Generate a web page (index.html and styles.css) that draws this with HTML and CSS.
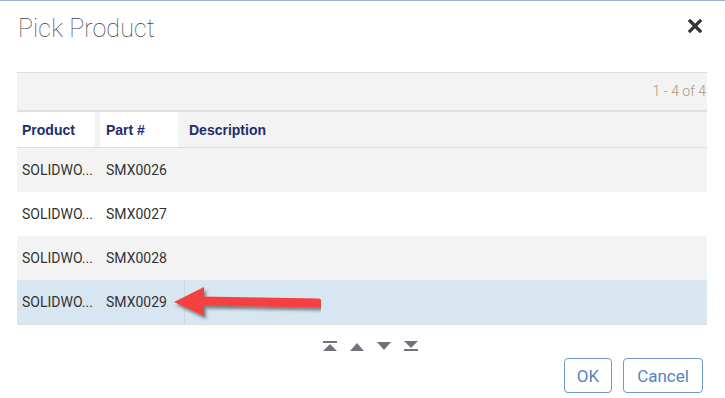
FILE: index.html
```html
<!DOCTYPE html>
<html>
<head>
<meta charset="utf-8">
<link rel="stylesheet" href="styles.css">
</head>
<body>
<div class="dialog">
  <div class="dlg-head">
    <h1 class="title">Pick Product</h1>
    <svg class="close" width="14" height="14" viewBox="0 0 14 14"><path d="M2 2 L12 12 M12 2 L2 12" stroke="#333" stroke-width="3.2" stroke-linecap="square"/></svg>
  </div>
  <div class="grid">
    <div class="pager-top">1 - 4 of 4</div>
    <div class="row hdr">
      <div class="c c1 hw">Product</div>
      <div class="gap"></div>
      <div class="c c2 hw">Part #</div>
      <div class="c c3">Description</div>
    </div>
    <div class="row alt"><div class="c c1">SOLIDWO...</div><div class="gap"></div><div class="c c2">SMX0026</div><div class="c c3"></div></div>
    <div class="row"><div class="c c1">SOLIDWO...</div><div class="gap"></div><div class="c c2">SMX0027</div><div class="c c3"></div></div>
    <div class="row alt"><div class="c c1">SOLIDWO...</div><div class="gap"></div><div class="c c2">SMX0028</div><div class="c c3"></div></div>
    <div class="row sel"><div class="c c1">SOLIDWO...</div><div class="gap"></div><div class="c c2">SMX0029</div><div class="c c3 sep"></div></div>
  </div>
  <div class="nav">
    <svg width="16" height="10" viewBox="0 0 16 10"><rect x="1" y="0" width="14" height="2" fill="#6f737d"/><path d="M8 3 L15 10 L1 10 Z" fill="#6f737d"/></svg>
    <svg width="16" height="10" viewBox="0 0 16 10"><path d="M8 2 L15 10 L1 10 Z" fill="#6f737d"/></svg>
    <svg width="16" height="10" viewBox="0 0 16 10"><path d="M1 1 L15 1 L8 9 Z" fill="#6f737d"/></svg>
    <svg width="16" height="10" viewBox="0 0 16 10"><path d="M1 0 L15 0 L8 7 Z" fill="#6f737d"/><rect x="1" y="8" width="14" height="2" fill="#6f737d"/></svg>
  </div>
  <div class="actions">
    <button class="btn ok">OK</button>
    <button class="btn cancel">Cancel</button>
  </div>
  <svg class="arrow" width="160" height="40" viewBox="0 0 160 40">
    <defs>
      <filter id="sh" x="-10%" y="-30%" width="130%" height="180%">
        <feDropShadow dx="2" dy="3" stdDeviation="1.6" flood-color="#333" flood-opacity="0.55"/>
      </filter>
    </defs>
    <g filter="url(#sh)" fill="#f4403f" stroke="#f4403f">
      <line x1="40" y1="17" x2="157" y2="19" stroke-width="9" stroke-linecap="round"/>
      <path d="M13 18 L43 3 L43 32 Z" stroke="none"/>
    </g>
  </svg>
</div>
</body>
</html>
```

FILE: styles.css
```css
html, body {
  margin: 0;
  padding: 0;
  background: #fff;
}
.dialog {
  position: relative;
  width: 725px;
  height: 397px;
  border-top: 1px solid #9fb2d2;
  font-family: Roboto, "Liberation Sans", sans-serif;
}
.dlg-head {
  height: 71px;
  display: flex;
  align-items: flex-start;
  justify-content: space-between;
  padding: 0 23px 0 18px;
}
.title {
  margin: 12px 0 0 0;
  font-family: Roboto, sans-serif;
  font-weight: 100;
  font-size: 25px;
  line-height: 32px;
  letter-spacing: 0.1px;
  color: #3a3f48;
}
.close {
  margin-top: 18px;
}
.grid {
  margin: 0 18px 0 17px;
  border-top: 1px solid #ddd;
  border-bottom: 1px solid #ddd;
}
.pager-top {
  height: 37px;
  background: #f3f3f3;
  text-align: right;
  font-weight: 300;
  font-size: 14px;
  line-height: 37px;
  color: #a89b7e;
  padding-right: 1px;
  border-bottom: 2px solid #e0e0e0;
}
.row {
  display: flex;
  height: 44px;
  align-items: stretch;
  font-size: 14px;
  color: #333;
}
.row.hdr {
  height: 35px;
  border-bottom: 1px solid #ddd;
  background: #f3f3f3;
  font-family: "Liberation Sans", Arial, sans-serif;
  font-weight: bold;
  color: #222d6e;
}
.row.alt { background: #f3f3f3; }
.row.sel { background: #d7e6f1; }
.c {
  display: flex;
  align-items: center;
  white-space: nowrap;
}
.c1 { width: 73px; padding-left: 5px; }
.gap { width: 5px; }
.c2 { width: 72px; padding-left: 6px; }
.c3 { flex: 1; padding-left: 11px; }
.hw { background: #fff; }
.sep {
  margin-left: 6px;
  padding-left: 5px;
  border-left: 1px solid #c9d9e4;
}
.nav {
  display: flex;
  justify-content: center;
  gap: 11px;
  margin-top: 16px;
  padding-left: 16px;
  height: 10px;
}
.actions {
  display: flex;
  justify-content: flex-end;
  gap: 11px;
  padding-right: 22px;
  margin-top: 7px;
}
.btn {
  height: 35px;
  border: 1px solid #6f98cc;
  border-radius: 4px;
  background: #fff;
  color: #5583c0;
  font-family: Roboto, sans-serif;
  font-size: 17px;
  padding: 0;
}
.ok { width: 48px; }
.cancel { width: 80px; }
.arrow {
  position: absolute;
  left: 161px;
  top: 283px;
}
```
